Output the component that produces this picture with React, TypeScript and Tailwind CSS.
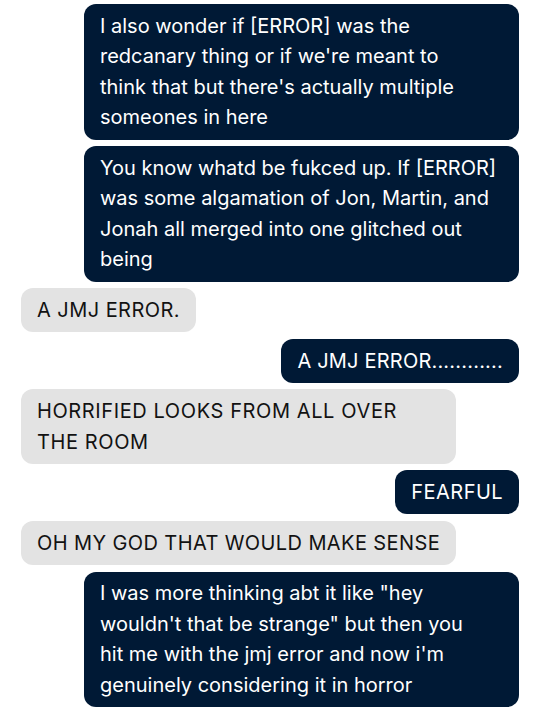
import React from "react";

const dark = "bg-[#001935] text-white";
const light = "bg-[#e3e3e3] text-[#121212]";

function Bubble({
  side,
  children,
  wide,
  track = "",
}: {
  side: "l" | "r";
  children: React.ReactNode;
  wide?: boolean;
  track?: string;
}) {
  return (
    <div className={`flex ${side === "r" ? "justify-end" : "justify-start"}`}>
      <div
        className={`${side === "r" ? dark : light} ${wide ? "w-[435px]" : ""} ${track} rounded-[12px] px-4 py-[6.75px] text-[20px] leading-[30.5px] whitespace-nowrap`}
      >
        {children}
      </div>
    </div>
  );
}

export default function App() {
  return (
    <div
      className="w-[540px] h-[715px] bg-white flex flex-col gap-[6.6px] pt-[4px] px-[21px] overflow-hidden"
      style={{ fontFamily: "Inter, Roboto, 'Noto Sans', sans-serif" }}
    >
      <Bubble side="r" wide>
        I also wonder if [ERROR] was the
        <br />
        redcanary thing or if we're meant to
        <br />
        think that but there's actually multiple
        <br />
        someones in here
      </Bubble>
      <Bubble side="r" wide>
        You know whatd be fukced up. If [ERROR]
        <br />
        was some algamation of Jon, Martin, and
        <br />
        Jonah all merged into one glitched out
        <br />
        being
      </Bubble>
      <Bubble side="l" track="tracking-[0.45px]">
        A JMJ ERROR.
      </Bubble>
      <Bubble side="r" track="tracking-[0.2px]">
        A JMJ ERROR............
      </Bubble>
      <Bubble side="l" wide track="tracking-[0.6px]">
        HORRIFIED LOOKS FROM ALL OVER
        <br />
        THE ROOM
      </Bubble>
      <Bubble side="r" track="tracking-[0.45px]">
        FEARFUL
      </Bubble>
      <Bubble side="l" track="tracking-[0.4px]">
        OH MY GOD THAT WOULD MAKE SENSE
      </Bubble>
      <Bubble side="r" wide>
        I was more thinking abt it like "hey
        <br />
        wouldn't that be strange" but then you
        <br />
        hit me with the jmj error and now i'm
        <br />
        genuinely considering it in horror
      </Bubble>
    </div>
  );
}
